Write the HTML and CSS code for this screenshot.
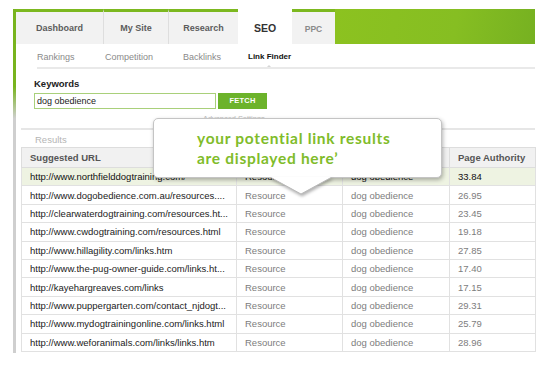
FILE: index.html
```html
<!DOCTYPE html>
<html>
<head>
<meta charset="utf-8">
<link rel="stylesheet" href="styles.css">
</head>
<body>
<div class="page">
  <div class="frame">
    <nav class="tabs">
      <div class="tab w-dash">Dashboard</div>
      <div class="tab w-site">My Site</div>
      <div class="tab w-research">Research</div>
      <div class="tab active">SEO</div>
      <div class="tab ppc">PPC</div>
      <div class="tab-fill"></div>
    </nav>
    <div class="subnav">
      <span class="sub w1">Rankings</span>
      <span class="sub w2">Competition</span>
      <span class="sub w3">Backlinks</span>
      <span class="sub current">Link Finder<i class="caret"></i></span>
    </div>
    <div class="keywords">
      <div class="kw-label">Keywords</div>
      <div class="kw-row">
        <div class="kw-input">dog obedience</div>
        <button class="fetch">FETCH</button>
      </div>
      <div class="advanced">Advanced Settings</div>
    </div>
    <section class="results">
      <div class="results-title">Results</div>
      <table class="grid">
        <colgroup>
          <col class="c1"><col class="c2"><col class="c3"><col class="c4">
        </colgroup>
        <thead>
          <tr><th>Suggested URL</th><th></th><th></th><th>Page Authority</th></tr>
        </thead>
        <tbody>
          <tr class="hl"><td>http://www.northfielddogtraining.com/</td><td>Resource</td><td>dog obedience</td><td>33.84</td></tr>
          <tr><td>http://www.dogobedience.com.au/resources....</td><td>Resource</td><td>dog obedience</td><td>26.95</td></tr>
          <tr><td>http://clearwaterdogtraining.com/resources.ht...</td><td>Resource</td><td>dog obedience</td><td>23.45</td></tr>
          <tr><td>http://www.cwdogtraining.com/resources.html</td><td>Resource</td><td>dog obedience</td><td>19.18</td></tr>
          <tr><td>http://www.hillagility.com/links.htm</td><td>Resource</td><td>dog obedience</td><td>27.85</td></tr>
          <tr><td>http://www.the-pug-owner-guide.com/links.ht...</td><td>Resource</td><td>dog obedience</td><td>17.40</td></tr>
          <tr><td>http://kayehargreaves.com/links</td><td>Resource</td><td>dog obedience</td><td>17.15</td></tr>
          <tr><td>http://www.puppergarten.com/contact_njdogt...</td><td>Resource</td><td>dog obedience</td><td>29.31</td></tr>
          <tr><td>http://www.mydogtrainingonline.com/links.html</td><td>Resource</td><td>dog obedience</td><td>25.79</td></tr>
          <tr><td>http://www.weforanimals.com/links/links.htm</td><td>Resource</td><td>dog obedience</td><td>28.96</td></tr>
        </tbody>
      </table>
    </section>
  </div>
  <div class="callout">
    <p class="callout-text">your potential link results<br>are displayed here’</p>
    <svg class="callout-tip" width="64" height="20" viewBox="0 0 64 20">
      <polygon points="1,0 63,0 32,17" fill="#ffffff"/>
      <polyline points="1,0 32,17 63,0" fill="none" stroke="#b9b9b9" stroke-width="1"/>
    </svg>
  </div>
</div>
</body>
</html>
```

FILE: styles.css
```css
* { box-sizing: border-box; }
html, body { margin: 0; padding: 0; background: #ffffff; }
body {
  width: 548px;
  height: 367px;
  overflow: hidden;
  font-family: "Liberation Sans", Arial, sans-serif;
}
.page { position: relative; width: 548px; height: 367px; padding-top: 9px; }

.frame {
  margin: 0 0 0 13px;
  width: 522px;
  border-left: 3px solid #c8c8c8;
  border-image: linear-gradient(to bottom, #78b41e 0, #78b41e 78px, #cfcfcf 110px, #cfcfcf 100%) 1;
  padding-bottom: 1px;
}

/* Tabs */
.tabs { display: flex; height: 35px; }
.tab {
  height: 35px;
  border-top: 3px solid #7cb81f;
  background: #f2f2f2;
  border-right: 1px solid #dedede;
  color: #5c5c5c;
  font-weight: bold;
  font-size: 9px;
  line-height: 33px;
  text-align: center;
}
.w-dash { width: 88px; }
.w-site { width: 65px; }
.w-research { width: 69px; border-right: none; }
.tab.active {
  width: 54px;
  border-top: none;
  border-right: none;
  background: #ffffff;
  color: #333333;
  font-size: 10.5px;
  line-height: 39px;
}
.tab.ppc {
  width: 43px;
  border-right: none;
  color: #8a8a8a;
  font-size: 8.5px;
  line-height: 34px;
}
.tab-fill {
  flex: 1;
  height: 35px;
  background: linear-gradient(100deg, #8cc220 0%, #86be22 60%, #76b121 100%);
}

/* Sub navigation */
.subnav {
  display: flex;
  margin-left: 21px;
  padding: 7px 0 4px;
  border-bottom: 2px solid #e9e9e9;
  font-size: 9px;
  line-height: 12px;
  color: #8a8a8a;
}
.sub.w1 { width: 68px; }
.sub.w2 { width: 78px; }
.sub.w3 { width: 65px; }
.sub.current {
  position: relative;
  color: #111111;
  font-weight: bold;
  font-size: 8px;
}
.caret {
  position: absolute;
  left: 19px;
  top: 14px;
  width: 0;
  height: 0;
  border-left: 2px solid transparent;
  border-right: 2px solid transparent;
  border-bottom: 2px solid #d6d6d6;
}

/* Keywords */
.keywords { padding: 9px 0 0 18px; }
.kw-label {
  font-size: 9.5px;
  font-weight: bold;
  color: #222222;
  line-height: 12px;
}
.kw-row { display: flex; margin-top: 3px; height: 16px; }
.kw-input {
  width: 182px;
  height: 16px;
  border: 1px solid #a9d07a;
  font-size: 9px;
  line-height: 14px;
  padding-left: 2px;
  color: #222222;
}
.fetch {
  margin-left: 2px;
  width: 49px;
  height: 16px;
  border: none;
  padding: 0;
  background: #6cb32b;
  color: #ffffff;
  font-family: "Liberation Sans", Arial, sans-serif;
  font-weight: bold;
  font-size: 7.5px;
  line-height: 16px;
  letter-spacing: 0.2px;
}
.advanced {
  width: 233px;
  margin-top: 4.5px;
  padding-left: 169px;
  font-size: 7.4px;
  line-height: 9px;
  color: #bdbdbd;
  white-space: nowrap;
}

/* Results */
.results {
  margin: 5.5px 0 0 5px;
  border-top: 2px solid #e6e6e6;
}
.results-title {
  padding: 4px 0 0 14px;
  font-size: 9.5px;
  line-height: 12px;
  color: #b5b5b5;
}
.grid {
  margin-top: 1px;
  width: 514px;
  table-layout: fixed;
  border-collapse: collapse;
  font-size: 9.5px;
}
.c1 { width: 215px; }
.c2 { width: 106px; }
.c3 { width: 107px; }
.c4 { width: 86px; }
.grid th, .grid td {
  border: 1px solid #e1e1e1;
  text-align: left;
  white-space: nowrap;
  overflow: hidden;
  padding: 0 0 0 8px;
}
.grid th {
  height: 20px;
  background: #f1f1f1;
  color: #555555;
  font-weight: bold;
  border-color: #dddddd;
}
.grid td { height: 18.4px; color: #7d7d7d; }
.grid td:first-child { color: #222222; }
.grid tr.hl td { background: #eef3e2; color: #111111; }

/* Callout */
.callout {
  position: absolute;
  left: 153px;
  top: 118px;
  width: 289px;
  height: 60px;
  background: #ffffff;
  border: 1px solid #c4c4c4;
  border-radius: 5px;
  box-shadow: 1px 2px 4px rgba(0, 0, 0, 0.3);
}
.callout-text {
  margin: 0;
  padding: 9px 0 0 43px;
  font-family: Lato, "Open Sans", sans-serif;
  font-weight: bold;
  font-size: 15.5px;
  line-height: 20px;
  color: #80bc2a;
  letter-spacing: 0.7px;
}
.callout-tip {
  position: absolute;
  left: 115px;
  top: 58px;
  filter: drop-shadow(1px 2px 1.5px rgba(0, 0, 0, 0.3));
}
```
